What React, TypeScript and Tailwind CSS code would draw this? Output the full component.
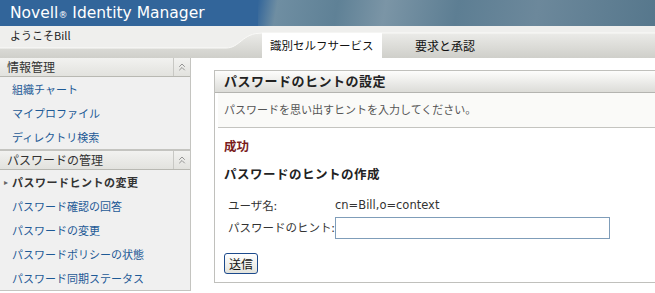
import { ChevronsUp } from "lucide-react";

const infoLinks = ["組織チャート", "マイプロファイル", "ディレクトリ検索"];
const pwLinks = ["パスワード確認の回答", "パスワードの変更", "パスワードポリシーの状態", "パスワード同期ステータス"];

const SectionHeader = ({ label }: { label: string }) => (
    <div className="flex h-[19px] border-b border-[#b8b8b2] bg-[linear-gradient(#f2f2f0,#e2e2de)]">
        <div className="flex-1 pl-[7px] text-[12px] leading-[18px] text-[#333]">{label}</div>
        <div className="flex w-[17px] items-center justify-center border-l border-[#c8c8c4]">
            <ChevronsUp size={12} strokeWidth={1.5} className="text-[#777]" />
        </div>
    </div>
);

const App = () => {
    return (
        <div className="relative h-[293px] w-[655px] overflow-hidden bg-white font-['Noto_Sans_CJK_JP',sans-serif]">
            {/* top bar */}
            <div className="flex h-[26px] bg-[#32659a]">
                <div className="w-[258px] whitespace-nowrap pl-[10px] font-['DejaVu_Sans',sans-serif] text-[15.5px] leading-[26px] text-white">
                    Novell<span className="text-[9px]">®</span> Identity Manager
                </div>
                <div className="flex-1 bg-[linear-gradient(100deg,#32659a_0%,#6f8ea2_5%,#5f8196_20%,#7b95a6_32%,#5d7e93_50%,#6c889b_70%,#56778c_100%)]"></div>
            </div>

            {/* welcome + tabs */}
            <div className="relative h-[32px] bg-[#efefed]">
                <svg className="absolute left-0 top-0" width="655" height="32">
                    <defs>
                        <linearGradient id="strip" x1="0" y1="0" x2="0" y2="1">
                            <stop offset="0" stopColor="#ebebe8" />
                            <stop offset="1" stopColor="#cfcfca" />
                        </linearGradient>
                    </defs>
                    <path d="M0,22 L226,22 C240,22 242,7 262,7 L655,7 L655,32 L0,32 Z" fill="url(#strip)" />
                    <path d="M0,22 L226,22 C240,22 242,7 262,7 L655,7" fill="none" stroke="#fafaf8" strokeWidth="1" />
                </svg>
                <div className="relative flex h-full">
                    <div className="w-[262px] pl-[10px] pt-[2px] text-[11px] leading-[14px] text-[#222]">ようこそBill</div>
                    <div className="mt-[7px] flex h-[25px] w-[120px] items-center bg-white pl-[8px] text-[11.5px] text-[#111]">識別セルフサービス</div>
                    <div className="mt-[7px] flex h-[25px] items-center pl-[33px] text-[12px] text-[#111]">要求と承認</div>
                </div>
            </div>

            <div className="flex">
                {/* sidebar */}
                <div className="w-[191px] border-r border-b border-[#c4c4c0] bg-[#f0f0f0] text-[11px]">
                    <SectionHeader label="情報管理" />
                    {infoLinks.map((l) => (
                        <div key={l} className="h-[24px] pl-[12px] leading-[24px] text-[#1e5a96]">{l}</div>
                    ))}
                    <div className="h-[2px] bg-[#c4c4c0]"></div>
                    <SectionHeader label="パスワードの管理" />
                    <div className="relative h-[24px] pl-[12px] font-bold leading-[24px] tracking-[0.5px] text-[#333]">
                        <span className="absolute left-[4px] top-0 text-[8px] font-normal text-[#666]">▸</span>
                        パスワードヒントの変更
                    </div>
                    {pwLinks.map((l) => (
                        <div key={l} className="h-[24px] pl-[12px] leading-[24px] text-[#1e5a96]">{l}</div>
                    ))}
                </div>

                {/* main */}
                <div className="flex-1 pl-[23px] pt-[12px]">
                    <div className="h-[213px] border-l border-t border-b border-[#c0c0bc]">
                        <div className="h-[22px] border-b border-[#b4b4b0] bg-[linear-gradient(#fdfdfc,#dcdcd8)] pl-[9px] text-[13px] font-bold leading-[20px] tracking-[0.5px] text-[#222]">
                            パスワードのヒントの設定
                        </div>
                        <div className="ml-[3px] h-[35px] border-b border-[#c4c4c0] bg-[#fafaf8] pl-[6px] text-[11px] leading-[33px] text-[#555]">
                            パスワードを思い出すヒントを入力してください。
                        </div>
                        <div className="pl-[9px] pt-[8px]">
                            <div className="text-[12.5px] font-bold leading-[20px] text-[#7a1c1c]">成功</div>
                            <div className="mt-[8px] text-[12.5px] font-bold leading-[20px] tracking-[0.5px] text-[#222]">パスワードのヒントの作成</div>
                            <div className="mt-[13px] flex h-[17px] items-center pl-[4px] text-[11.5px] text-[#333]">
                                <span className="w-[107px]">ユーザ名:</span>
                                <span className="font-['DejaVu_Sans',sans-serif] text-[11.5px]">cn=Bill,o=context</span>
                            </div>
                            <div className="mt-[3px] flex items-center pl-[4px] text-[11.5px] text-[#333]">
                                <span className="w-[107px]">パスワードのヒント:</span>
                                <input className="h-[22px] w-[275px] border border-[#7f9db9] bg-white outline-none" />
                            </div>
                            <button className="mt-[14px] h-[21px] w-[34px] rounded-[3px] border border-[#1c4a8c] bg-[linear-gradient(#ffffff,#e4e4dc)] text-[12px] leading-[18px] text-[#111]">
                                送信
                            </button>
                        </div>
                    </div>
                </div>
            </div>
        </div>
    );
};

export default App;
